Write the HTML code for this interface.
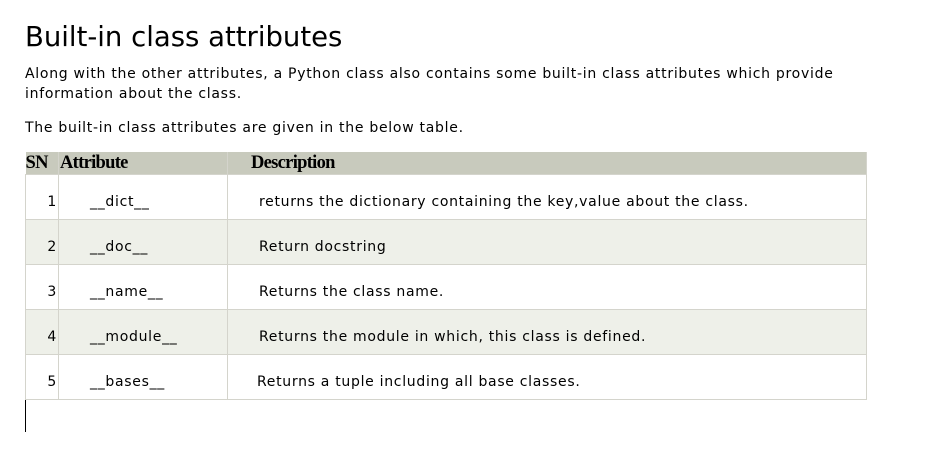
<!DOCTYPE html>
<html><head><style>
body{margin:0;background:#fff;font-family:"DejaVu Sans","Liberation Sans",sans-serif;color:#000;}
h1{position:absolute;left:25px;top:19px;margin:0;font-weight:normal;font-size:27.5px;line-height:36px;}
p{position:absolute;left:25px;margin:0;font-size:14px;line-height:20px;letter-spacing:0.72px;width:845px;}
table{position:absolute;left:25px;top:152px;border-collapse:collapse;width:841px;table-layout:fixed;font-size:14px;letter-spacing:0.7px;}
th{background:#c8cabd;font-family:"Liberation Serif",serif;font-weight:bold;font-size:18.5px;letter-spacing:-0.7px;text-align:left;height:22px;padding:0;border-right:1px solid #d4d4cc;white-space:nowrap;overflow:hidden;}
td{height:45px;padding:9px 0 0 0;box-sizing:border-box;border:1px solid #d4d4cc;white-space:nowrap;}
tr.g td{background:#eef0e9;}
td.n{text-align:right;padding-right:1px;}
td.a{padding-left:31px;}
td.d{padding-left:31px;}
.cur{position:absolute;left:25px;top:400px;width:1px;height:32px;background:#000;}
</style></head><body>
<h1>Built-in class attributes</h1>
<p style="top:64px">Along with the other attributes, a Python class also contains some built-in class attributes which provide information about the class.</p>
<p style="top:118px">The built-in class attributes are given in the below table.</p>
<table>
<colgroup><col style="width:33px"><col style="width:169px"><col style="width:639px"></colgroup>
<tr><th>SN</th><th style="padding-left:1px">Attribute</th><th style="padding-left:23px">Description</th></tr>
<tr><td class="n">1</td><td class="a">__dict__</td><td class="d">returns the dictionary containing the key,value about the class.</td></tr>
<tr class="g"><td class="n">2</td><td class="a">__doc__</td><td class="d">Return docstring</td></tr>
<tr><td class="n">3</td><td class="a">__name__</td><td class="d">Returns the class name.</td></tr>
<tr class="g"><td class="n">4</td><td class="a">__module__</td><td class="d">Returns the module in which, this class is defined.</td></tr>
<tr><td class="n">5</td><td class="a">__bases__</td><td class="d" style="padding-left:29px">Returns a tuple including all base classes.</td></tr>
</table>
<div class="cur"></div>
</body></html>
